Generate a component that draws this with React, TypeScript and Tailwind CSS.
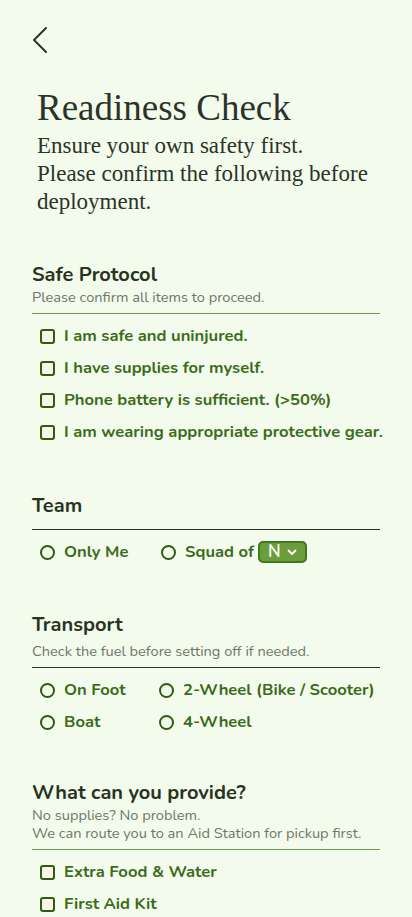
import { useState } from 'react';

const sans = "font-['Nunito','Open_Sans','Noto_Sans',sans-serif]";

function CheckItem({ label }: { label: string }) {
  const [on, setOn] = useState(false);
  return (
    <label className="flex items-center gap-[9px] h-[32px] cursor-pointer" onClick={() => setOn(!on)}>
      <span
        className={`w-[15px] h-[15px] rounded-[3px] border-2 border-[#2f5c12] flex-shrink-0 ${on ? 'bg-[#5f9232]' : 'bg-[#f6f3e8]'}`}
      />
      <span className="text-[16.6px] font-bold text-[#3c6b1c] whitespace-nowrap">{label}</span>
    </label>
  );
}

function RadioItem({ label, children }: { label: string; children?: React.ReactNode }) {
  return (
    <div className="flex items-center gap-[9px] h-[32px]">
      <span className="w-[15px] h-[15px] rounded-full border-2 border-[#2f5c12] flex-shrink-0" />
      <span className="text-[16.6px] font-bold text-[#3c6b1c] whitespace-nowrap">{label}</span>
      {children}
    </div>
  );
}

function SectionHead({
  title,
  sub,
  lineColor,
  subGap = '',
}: {
  title: string;
  sub?: string[];
  lineColor: string;
  subGap?: string;
}) {
  return (
    <div className={`border-b ${lineColor} ${sub ? 'pb-[7px]' : 'pb-[10px]'}`}>
      <h2 className="text-[20px] font-bold text-[#283321] leading-[26px]">{title}</h2>
      <div className={subGap}>
        {sub?.map((s) => (
          <p key={s} className="text-[14.6px] text-[#6f766a] leading-[18px]">
            {s}
          </p>
        ))}
      </div>
    </div>
  );
}

export default function App() {
  return (
    <div className={`min-h-[917px] bg-[#f2fbec] ${sans}`}>
      <div className="h-[62px] flex items-start px-[31px] pt-[26px]">
        <svg width="18" height="28" viewBox="0 0 18 28" fill="none">
          <path d="M15 2 L3 14 L15 26" stroke="#2d3328" strokeWidth="2" strokeLinecap="round" strokeLinejoin="round" />
        </svg>
      </div>

      <div className="px-[37px] pt-[24px]">
        <h1 className="font-['Liberation_Serif',serif] text-[37px] leading-[44px] text-[#2d3328]">Readiness Check</h1>
        <p className="font-['Liberation_Serif',serif] text-[23px] leading-[28px] text-[#2d3328] mt-[2px]">
          Ensure your own safety first.
          <br />
          Please confirm the following before deployment.
        </p>
      </div>

      <div className="px-[32px] pt-[46px]">
        <SectionHead title="Safe Protocol" sub={['Please confirm all items to proceed.']} lineColor="border-[#6f9a45]" />
        <div className="pl-[8px] pt-[6px]">
          <CheckItem label="I am safe and uninjured." />
          <CheckItem label="I have supplies for myself." />
          <CheckItem label="Phone battery is sufficient. (>50%)" />
          <CheckItem label="I am wearing appropriate protective gear." />
        </div>

        <div className="pt-[45px]">
          <SectionHead title="Team" lineColor="border-[#283321]" />
          <div className="pl-[8px] pt-[6px] flex">
            <div className="w-[121px]">
              <RadioItem label="Only Me" />
            </div>
            <RadioItem label="Squad of">
              <span className="flex items-center gap-[6px] h-[22px] px-[8px] rounded-[5px] border-2 border-[#3f7a1c] bg-[#6a9e3c] text-white text-[17px] font-semibold -ml-[5px]">
                N
                <svg width="10" height="7" viewBox="0 0 10 7" fill="none">
                  <path d="M1.5 1.5 L5 5 L8.5 1.5" stroke="white" strokeWidth="1.8" strokeLinecap="round" strokeLinejoin="round" />
                </svg>
              </span>
            </RadioItem>
          </div>
        </div>

        <div className="pt-[44px]">
          <SectionHead
            title="Transport"
            sub={['Check the fuel before setting off if needed.']}
            lineColor="border-[#283321]"
            subGap="pt-[4px]"
          />
          <div className="pl-[8px] pt-[6px] grid grid-cols-[119px_1fr]">
            <RadioItem label="On Foot" />
            <RadioItem label="2-Wheel (Bike / Scooter)" />
            <RadioItem label="Boat" />
            <RadioItem label="4-Wheel" />
          </div>
        </div>

        <div className="pt-[42px]">
          <SectionHead
            title="What can you provide?"
            sub={['No supplies? No problem.', 'We can route you to an Aid Station for pickup first.']}
            lineColor="border-[#6f9a45]"
          />
          <div className="pl-[8px] pt-[6px]">
            <CheckItem label="Extra Food & Water" />
            <CheckItem label="First Aid Kit" />
          </div>
        </div>
      </div>
    </div>
  );
}
